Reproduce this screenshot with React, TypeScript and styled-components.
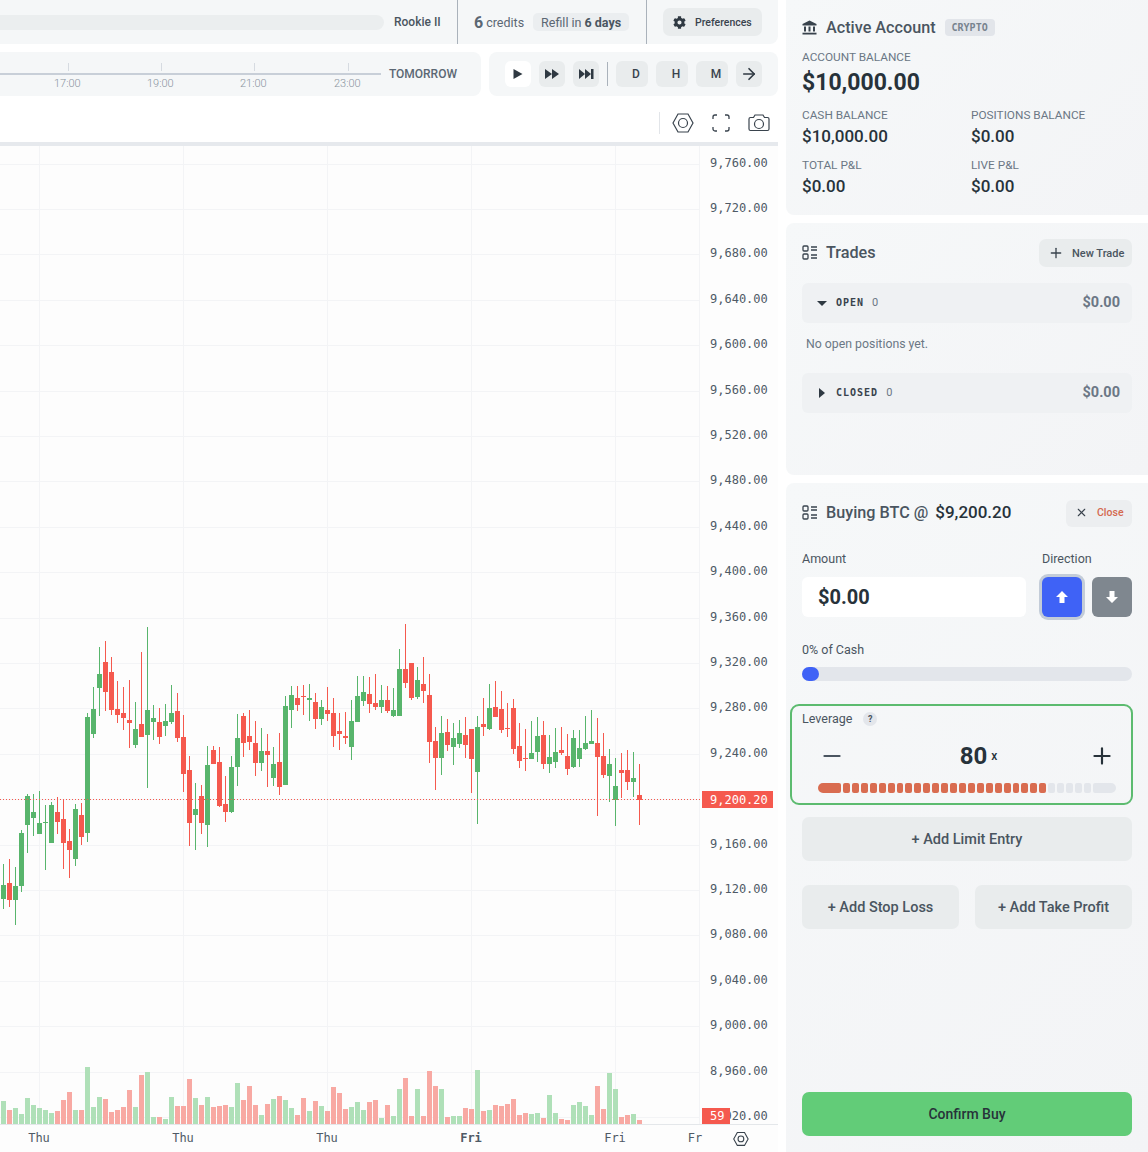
import styled, { createGlobalStyle } from 'styled-components';
import { ArrowRight, Minus, Plus, X } from 'lucide-react';
import { FaCog } from 'react-icons/fa';

type Candle = [number, number, number, number, number];

// direction (1 up, 0 down), then high, body top, body bottom, low, measured in 3x crop rows from y=620
const CANDLES: Candle[] = [
  [1, 732, 795, 837, 867], [0, 717, 789, 840, 861], [1, 741, 798, 840, 915], [1, 630, 639, 798, 816],
  [1, 522, 528, 615, 699], [1, 522, 576, 594, 648], [1, 513, 609, 642, 642], [1, 555, 606, 609, 750],
  [1, 546, 555, 669, 669], [0, 531, 576, 606, 642], [0, 537, 597, 669, 747], [0, 627, 663, 690, 774],
  [1, 552, 567, 717, 738], [0, 549, 585, 651, 675], [1, 279, 291, 639, 666], [1, 201, 267, 342, 354],
  [1, 81, 162, 204, 288], [0, 63, 126, 216, 273], [0, 111, 156, 270, 285], [0, 183, 267, 285, 309],
  [0, 201, 279, 294, 330], [0, 180, 300, 309, 384], [1, 246, 327, 375, 384], [0, 96, 312, 351, 351],
  [1, 21, 270, 345, 504], [1, 255, 294, 306, 360], [0, 264, 306, 351, 372], [1, 252, 303, 318, 348],
  [1, 195, 279, 306, 312], [0, 219, 273, 354, 366], [0, 285, 351, 462, 516], [0, 408, 450, 609, 678],
  [1, 489, 567, 585, 690], [0, 495, 528, 609, 642], [1, 378, 435, 615, 681], [0, 378, 390, 432, 432],
  [0, 381, 426, 558, 561], [0, 468, 552, 576, 606], [1, 408, 441, 576, 579], [1, 282, 354, 441, 498],
  [0, 279, 288, 369, 411], [0, 270, 348, 366, 390], [0, 303, 369, 429, 468], [1, 324, 393, 429, 453],
  [0, 342, 393, 405, 501], [1, 381, 432, 474, 498], [0, 339, 426, 501, 525], [1, 228, 258, 495, 495],
  [1, 198, 225, 270, 324], [0, 198, 234, 255, 273], [0, 195, 228, 231, 285], [1, 192, 234, 240, 303],
  [0, 219, 246, 297, 327], [1, 240, 261, 297, 315], [0, 201, 270, 282, 303], [0, 234, 279, 348, 381],
  [0, 279, 333, 342, 390], [0, 276, 348, 354, 372], [1, 240, 303, 381, 420], [1, 168, 228, 306, 306],
  [1, 168, 216, 243, 258], [0, 171, 222, 252, 279], [0, 162, 249, 261, 270], [1, 195, 240, 261, 279],
  [0, 198, 240, 273, 279], [1, 204, 270, 288, 291], [1, 87, 147, 288, 288], [0, 12, 147, 189, 204],
  [0, 129, 129, 234, 240], [1, 141, 180, 231, 237], [0, 111, 192, 213, 249], [0, 162, 225, 366, 429],
  [0, 321, 363, 414, 510], [1, 288, 339, 414, 465], [0, 297, 336, 375, 393], [1, 309, 354, 381, 435],
  [1, 300, 339, 372, 384], [0, 291, 345, 375, 414], [0, 327, 327, 417, 519], [1, 288, 321, 456, 612],
  [0, 234, 312, 321, 348], [1, 192, 264, 327, 330], [0, 183, 261, 291, 291], [0, 213, 267, 330, 339],
  [0, 249, 324, 327, 351], [0, 237, 264, 387, 402], [0, 309, 378, 423, 444], [0, 327, 414, 417, 453],
  [1, 303, 399, 417, 417], [1, 291, 348, 396, 426], [0, 303, 345, 432, 447], [1, 345, 411, 432, 459],
  [1, 324, 396, 426, 444], [0, 321, 390, 399, 405], [0, 342, 408, 447, 465], [1, 330, 354, 441, 444],
  [1, 330, 384, 417, 441], [1, 288, 369, 387, 390], [1, 270, 363, 372, 372], [0, 294, 369, 411, 588],
  [0, 339, 408, 465, 474], [1, 387, 432, 468, 546], [1, 414, 498, 540, 618], [0, 399, 450, 459, 534],
  [0, 390, 450, 486, 510], [1, 396, 474, 486, 531], [0, 432, 525, 540, 615],
];

// bar tops, in 3x crop rows from y=1050
const VOLUMES = [
  153, 180, 174, 192, 144, 165, 174, 180, 189, 183, 150, 126, 180, 180, 51, 171, 141, 147, 186, 180, 171, 120, 171,
  75, 66, 201, 201, 207, 141, 168, 168, 87, 144, 165, 141, 171, 168, 165, 171, 99, 150, 108, 165, 195, 162, 147, 138,
  150, 174, 195, 144, 183, 153, 168, 183, 111, 129, 177, 171, 156, 180, 156, 150, 204, 165, 198, 117, 84, 198, 117,
  198, 63, 108, 117, 201, 198, 198, 174, 177, 60, 183, 180, 165, 168, 162, 147, 195, 189, 192, 189, 204, 135, 189,
  207, 210, 165, 156, 168, 195, 108, 177, 69, 117, 201, 195, 192, 210,
];

const PRICES = [
  '9,760.00', '9,720.00', '9,680.00', '9,640.00', '9,600.00', '9,560.00', '9,520.00', '9,480.00', '9,440.00',
  '9,400.00', '9,360.00', '9,320.00', '9,280.00', '9,240.00', '9,200.00', '9,160.00', '9,120.00', '9,080.00',
  '9,040.00', '9,000.00', '8,960.00', '8,920.00',
];

const DAY_LABELS = [
  { x: 39, text: 'Thu' },
  { x: 183, text: 'Thu' },
  { x: 327, text: 'Thu' },
  { x: 471, text: 'Fri', bold: true },
  { x: 615, text: 'Fri' },
  { x: 695, text: 'Fr' },
];

const HOURS = ['17:00', '19:00', '21:00', '23:00'];
const SEGMENTS = Array.from({ length: 28 }, (_, i) => i);

const UP = '#58b56c';
const DOWN = '#f5594e';

const priceY = (i: number) => Math.round(163.6 + i * 45.4);

const GlobalStyle = createGlobalStyle`
  html, body {
    margin: 0;
    background: #fff;
  }
  * {
    box-sizing: border-box;
  }
  body {
    font-family: Roboto, "Noto Sans", sans-serif;
    color: #27323a;
  }
`;

const HexIcon = ({ size = 22 }: { size?: number }) => (
  <svg width={size} height={size} viewBox="0 0 22 22" fill="none" stroke="#39434d" strokeWidth="1.2">
    <polygon points="1,11 6,2 16,2 21,11 16,20 6,20" />
    <circle cx="11" cy="11" r="4.5" />
  </svg>
);

const FullscreenIcon = () => (
  <svg width="18" height="18" viewBox="0 0 18 18" fill="none" stroke="#39434d" strokeWidth="1.3">
    <path d="M1 5V3a2 2 0 0 1 2-2h2M13 1h2a2 2 0 0 1 2 2v2M17 13v2a2 2 0 0 1-2 2h-2M5 17H3a2 2 0 0 1-2-2v-2" />
  </svg>
);

const CameraIcon = () => (
  <svg width="22" height="18" viewBox="0 0 22 18" fill="none" stroke="#39434d" strokeWidth="1.2">
    <path d="M2.5 3.5h3l1.5-2.5h8l1.5 2.5h3a1.5 1.5 0 0 1 1.5 1.5v10a1.5 1.5 0 0 1-1.5 1.5h-17A1.5 1.5 0 0 1 1 15V5a1.5 1.5 0 0 1 1.5-1.5z" />
    <circle cx="11" cy="10" r="4.5" />
  </svg>
);

const BankIcon = () => (
  <svg width="15" height="15" viewBox="0 0 15 15" fill="#39434d">
    <path d="M7.5 0.5 14.5 4v1.5H.5V4z" />
    <rect x="2" y="6.5" width="2" height="5" />
    <rect x="6.5" y="6.5" width="2" height="5" />
    <rect x="11" y="6.5" width="2" height="5" />
    <rect x=".5" y="12.7" width="14" height="1.8" />
  </svg>
);

const ListIcon = () => (
  <svg width="15" height="15" viewBox="0 0 15 15" fill="none" stroke="#39434d" strokeWidth="1.3">
    <rect x="1" y="1" width="5" height="5" rx="1" />
    <rect x="1" y="9" width="5" height="5" rx="1" />
    <path d="M9 2h6M9 5h6M9 10h6M9 13h6" />
  </svg>
);

const PlayIcon = () => (
  <svg width="10" height="12" viewBox="0 0 10 12" fill="#2f3942">
    <polygon points="0.5,1 9.5,6 0.5,11" />
  </svg>
);

const ForwardIcon = () => (
  <svg width="14" height="12" viewBox="0 0 14 12" fill="#2f3942">
    <polygon points="0,1 7,6 0,11" />
    <polygon points="7,1 14,6 7,11" />
  </svg>
);

const SkipIcon = () => (
  <svg width="15" height="12" viewBox="0 0 15 12" fill="#2f3942">
    <polygon points="0,1 6,6 0,11" />
    <polygon points="6,1 12,6 6,11" />
    <rect x="12" y="1" width="2.5" height="10" />
  </svg>
);

const Caret = ({ open }: { open?: boolean }) => (
  <svg width="10" height="10" viewBox="0 0 10 10" fill="#2f3942">
    {open ? <polygon points="0,3 10,3 5,8" /> : <polygon points="2,0 8,5 2,10" />}
  </svg>
);

const ArrowIcon = ({ down }: { down?: boolean }) => (
  <svg width="14" height="14" viewBox="0 0 14 14" fill="#fff">
    <g transform={down ? 'rotate(180 7 7)' : undefined}>
      <polygon points="7,1 13,7 9.5,7 9.5,13 4.5,13 4.5,7 1,7" />
    </g>
  </svg>
);

const Chart = () => (
  <ChartSvg viewBox="0 146 778 1006" width="778" height="1006">
    {PRICES.map((_, i) => (
      <rect key={i} x="0" y={priceY(i)} width="699" height="1" fill="#f3f4f6" />
    ))}
    {[39, 183, 327, 471, 615, 699].map((x) => (
      <rect key={x} x={x} y="146" width="1" height="978" fill="#f3f4f6" />
    ))}
    {VOLUMES.map((top, i) => (
      <rect
        key={i}
        x={1 + i * 6}
        y={1050 + top / 3}
        width="5"
        height={1124 - (1050 + top / 3)}
        fill={CANDLES[i][0] ? '#afe0b8' : '#f8a9a3'}
      />
    ))}
    <rect x="0" y="1124" width="778" height="1" fill="#e4e7ea" />
    {CANDLES.map(([dir, high, top, bottom, low], i) => {
      const color = dir ? UP : DOWN;
      return (
        <g key={i} fill={color}>
          <rect x={3 + i * 6} y={620 + high / 3} width="1" height={(low - high) / 3} />
          <rect x={1 + i * 6} y={620 + top / 3} width="5" height={Math.max((bottom - top) / 3, 1)} />
        </g>
      );
    })}
    <line x1="0" y1="799.5" x2="702" y2="799.5" stroke={DOWN} strokeWidth="1" strokeDasharray="1 2" />
    {PRICES.map((price, i) =>
      price === '9,200.00' ? null : (
        <AxisText key={price} x="710" y={priceY(i) + 3}>
          {price}
        </AxisText>
      ),
    )}
    <rect x="702" y="791" width="71" height="17" fill={DOWN} />
    <AxisText x="710" y="804" $light>
      9,200.20
    </AxisText>
    <rect x="702" y="1108" width="28" height="16" fill={DOWN} />
    <AxisText x="710" y="1120" $light>
      59
    </AxisText>
    {DAY_LABELS.map((label) => (
      <AxisText
        key={label.x}
        x={label.x}
        y="1142"
        textAnchor="middle"
        fontWeight={label.bold ? 700 : 400}
      >
        {label.text}
      </AxisText>
    ))}
    <g transform="translate(733 1131) scale(0.72)">
      <polygon points="1,11 6,2 16,2 21,11 16,20 6,20" fill="none" stroke="#39434d" strokeWidth="1.5" />
      <circle cx="11" cy="11" r="4" fill="none" stroke="#39434d" strokeWidth="1.5" />
    </g>
  </ChartSvg>
);

const App = () => {
  return (
    <Page>
      <GlobalStyle />
      <LeftColumn>
        <TopBar>
          <XpTrack />
          <RankName>Rookie II</RankName>
          <CreditsCell>
            <CreditCount>6</CreditCount>
            <CreditLabel>credits</CreditLabel>
            <RefillPill>
              Refill in <b>6 days</b>
            </RefillPill>
          </CreditsCell>
          <PreferencesCell>
            <PreferencesButton>
              <FaCog size={13} color="#2f3942" />
              Preferences
            </PreferencesButton>
          </PreferencesCell>
        </TopBar>
        <ReplayRow>
          <Timeline>
            <TimelineTrack>
              {HOURS.map((hour) => (
                <HourMark key={hour}>
                  <HourLabel>{hour}</HourLabel>
                </HourMark>
              ))}
            </TimelineTrack>
            <TomorrowLabel>TOMORROW</TomorrowLabel>
          </Timeline>
          <Controls>
            <IconButton $active>
              <PlayIcon />
            </IconButton>
            <IconButton>
              <ForwardIcon />
            </IconButton>
            <IconButton>
              <SkipIcon />
            </IconButton>
            <ControlDivider />
            <IntervalButton>D</IntervalButton>
            <IntervalButton>H</IntervalButton>
            <IntervalButton>M</IntervalButton>
            <IconButton>
              <ArrowRight size={18} color="#2f3942" strokeWidth={2.2} />
            </IconButton>
          </Controls>
        </ReplayRow>
        <ChartToolbar>
          <ToolDivider />
          <ToolIcon>
            <HexIcon />
          </ToolIcon>
          <ToolIcon>
            <FullscreenIcon />
          </ToolIcon>
          <ToolIcon>
            <CameraIcon />
          </ToolIcon>
        </ChartToolbar>
        <Chart />
      </LeftColumn>

      <RightColumn>
        <AccountPanel>
          <PanelTitleRow>
            <BankIcon />
            <PanelTitle>Active Account</PanelTitle>
            <Badge>CRYPTO</Badge>
          </PanelTitleRow>
          <StatLabel>ACCOUNT BALANCE</StatLabel>
          <MainBalance>$10,000.00</MainBalance>
          <StatGrid>
            <div>
              <StatLabel>CASH BALANCE</StatLabel>
              <StatValue>$10,000.00</StatValue>
            </div>
            <div>
              <StatLabel>POSITIONS BALANCE</StatLabel>
              <StatValue>$0.00</StatValue>
            </div>
            <div>
              <StatLabel>TOTAL P&amp;L</StatLabel>
              <StatValue>$0.00</StatValue>
            </div>
            <div>
              <StatLabel>LIVE P&amp;L</StatLabel>
              <StatValue>$0.00</StatValue>
            </div>
          </StatGrid>
        </AccountPanel>

        <TradesPanel>
          <TradesHeader>
            <PanelTitleRow>
              <ListIcon />
              <PanelTitle>Trades</PanelTitle>
            </PanelTitleRow>
            <NewTradeButton>
              <Plus size={16} color="#39434d" />
              New Trade
            </NewTradeButton>
          </TradesHeader>
          <GroupRow>
            <Caret open />
            <GroupName>OPEN</GroupName>
            <GroupCount>0</GroupCount>
            <GroupTotal>$0.00</GroupTotal>
          </GroupRow>
          <EmptyNote>No open positions yet.</EmptyNote>
          <GroupRow>
            <Caret />
            <GroupName>CLOSED</GroupName>
            <GroupCount>0</GroupCount>
            <GroupTotal>$0.00</GroupTotal>
          </GroupRow>
        </TradesPanel>

        <OrderPanel>
          <OrderHeader>
            <PanelTitleRow>
              <ListIcon />
              <PanelTitle>Buying BTC @</PanelTitle>
              <OrderPrice>$9,200.20</OrderPrice>
            </PanelTitleRow>
            <CloseButton>
              <X size={13} color="#39434d" />
              <CloseLabel>Close</CloseLabel>
            </CloseButton>
          </OrderHeader>
          <AmountRow>
            <AmountField>
              <FieldLabel>Amount</FieldLabel>
              <AmountInput>$0.00</AmountInput>
            </AmountField>
            <div>
              <FieldLabel>Direction</FieldLabel>
              <DirectionButtons>
                <DirectionButton $selected>
                  <ArrowIcon />
                </DirectionButton>
                <DirectionButton>
                  <ArrowIcon down />
                </DirectionButton>
              </DirectionButtons>
            </div>
          </AmountRow>
          <CashLabel>0% of Cash</CashLabel>
          <SliderTrack>
            <SliderThumb />
          </SliderTrack>
          <LeverageBox>
            <LeverageHead>
              <FieldLabel as="span">Leverage</FieldLabel>
              <HelpDot>?</HelpDot>
            </LeverageHead>
            <Stepper>
              <Minus size={26} color="#4a5560" strokeWidth={2} />
              <LeverageValue>
                80<LeverageUnit>x</LeverageUnit>
              </LeverageValue>
              <Plus size={26} color="#27323a" strokeWidth={2} />
            </Stepper>
            <SegmentBar>
              <Segment $on $wide />
              {SEGMENTS.map((i) => (
                <Segment key={i} $on={i < 23} />
              ))}
              <Segment $wide />
            </SegmentBar>
          </LeverageBox>
          <AddButton>+ Add Limit Entry</AddButton>
          <AddRow>
            <AddButton>+ Add Stop Loss</AddButton>
            <AddButton>+ Add Take Profit</AddButton>
          </AddRow>
          <ConfirmButton>Confirm Buy</ConfirmButton>
        </OrderPanel>
      </RightColumn>
    </Page>
  );
};

const Page = styled.div`
  display: flex;
  gap: 8px;
  width: 1148px;
  height: 1152px;
  overflow: hidden;
  background: #fff;
`;

const LeftColumn = styled.div`
  display: flex;
  flex-direction: column;
  width: 778px;
  flex: none;
`;

const TopBar = styled.div`
  display: flex;
  flex: none;
  align-items: center;
  height: 44px;
  background: #f5f7f8;
  border-bottom-right-radius: 8px;
`;

const XpTrack = styled.div`
  flex: 1;
  height: 15px;
  background: #ebeeef;
  border-radius: 0 8px 8px 0;
`;

const RankName = styled.div`
  width: 73px;
  padding-left: 10px;
  font-size: 12px;
  font-weight: 500;
  color: #4a5560;
`;

const CreditsCell = styled.div`
  display: flex;
  align-items: center;
  width: 190px;
  height: 44px;
  padding-left: 16px;
  border-left: 1px solid #aab2bb;
  border-right: 1px solid #aab2bb;
`;

const CreditCount = styled.span`
  font-size: 16px;
  font-weight: 700;
  color: #5b6773;
`;

const CreditLabel = styled.span`
  margin-left: 3px;
  font-size: 12.5px;
  color: #5b6773;
`;

const RefillPill = styled.span`
  display: flex;
  align-items: center;
  gap: 3px;
  height: 18px;
  margin-left: 9px;
  padding: 0 8px;
  background: #ebeef0;
  border-radius: 5px;
  font-size: 12.5px;
  color: #5b6773;
  white-space: nowrap;

  b {
    font-weight: 700;
    color: #4a5560;
  }
`;

const PreferencesCell = styled.div`
  display: flex;
  width: 131px;
  padding-left: 16px;
`;

const PreferencesButton = styled.button`
  display: flex;
  align-items: center;
  gap: 9px;
  width: 99px;
  height: 28px;
  padding: 0 9px 0 10px;
  border: 0;
  border-radius: 7px;
  background: #e9eced;
  font: 500 10.5px Roboto, sans-serif;
  color: #39434d;
  white-space: nowrap;
`;

const ReplayRow = styled.div`
  display: flex;
  flex: none;
  gap: 8px;
  height: 44px;
  margin-top: 8px;
`;

const Timeline = styled.div`
  display: flex;
  align-items: center;
  width: 481px;
  padding-right: 24px;
  background: #f5f7f8;
  border-radius: 0 8px 8px 0;
`;

const TimelineTrack = styled.div`
  position: relative;
  flex: 1;
  height: 2px;
  background: #c8cfd8;
`;

const HourMark = styled.div`
  position: absolute;
  top: -10px;
  width: 1px;
  height: 8px;
  background: #d6dbe1;

  &:nth-child(1) {
    left: 68px;
  }
  &:nth-child(2) {
    left: 161px;
  }
  &:nth-child(3) {
    left: 254px;
  }
  &:nth-child(4) {
    left: 348px;
  }
`;

const HourLabel = styled.span`
  position: absolute;
  top: 14px;
  left: -14px;
  font-size: 11px;
  font-weight: 300;
  color: #8a94a0;
`;

const TomorrowLabel = styled.span`
  margin-left: 8px;
  font-size: 12px;
  font-weight: 500;
  color: #5b6773;
`;

const Controls = styled.div`
  display: flex;
  flex: 1;
  align-items: center;
  gap: 8px;
  padding: 0 16px;
  background: #f5f7f8;
  border-radius: 8px;
`;

const IconButton = styled.button<{ $active?: boolean }>`
  display: flex;
  align-items: center;
  justify-content: center;
  width: 26px;
  height: 26px;
  padding: 0;
  border: 0;
  border-radius: 6px;
  background: ${(p) => (p.$active ? '#fff' : '#e9eced')};
`;

const ControlDivider = styled.div`
  width: 1px;
  height: 24px;
  background: #aab2bb;
`;

const IntervalButton = styled.button`
  width: 32px;
  height: 26px;
  padding: 0 0 0 8px;
  border: 0;
  border-radius: 6px;
  background: #e9eced;
  font: 500 12px Roboto, sans-serif;
  color: #39434d;
`;

const ChartToolbar = styled.div`
  display: flex;
  flex: none;
  align-items: center;
  justify-content: flex-end;
  height: 50px;
  padding: 8px 8px 0 0;
  border-bottom: 4px solid #e6e9ed;
`;

const ToolDivider = styled.div`
  width: 1px;
  height: 22px;
  margin-right: 12px;
  background: #e2e5e9;
`;

const ToolIcon = styled.div`
  display: flex;
  align-items: center;
  justify-content: center;
  width: 22px;
  margin-left: 16px;

  &:nth-child(2) {
    margin-left: 0;
  }
`;

const ChartSvg = styled.svg`
  display: block;
  flex: none;
  background: #fdfdfd;
`;

const AxisText = styled.text<{ $light?: boolean }>`
  font-family: "DejaVu Sans Mono", monospace;
  font-size: 12px;
  fill: ${(p) => (p.$light ? '#fff' : '#4f5a66')};
`;

const RightColumn = styled.div`
  display: flex;
  flex: 1;
  flex-direction: column;
  gap: 8px;
  min-width: 0;
`;

const PanelBase = styled.section`
  padding: 16px;
  background: linear-gradient(135deg, #f6f8f9, #f3f4f6);
  border-radius: 8px 0 0 8px;
`;

const AccountPanel = styled(PanelBase)`
  flex: none;
  height: 215px;
  border-top-left-radius: 0;
  padding-top: 17px;
`;

const PanelTitleRow = styled.div`
  display: flex;
  align-items: center;
  gap: 9px;
  height: 20px;
`;

const PanelTitle = styled.h2`
  margin: 0;
  font-size: 16.2px;
  font-weight: 500;
  color: #4a5560;
`;

const Badge = styled.span`
  padding: 3px 7px;
  background: #e2e5ea;
  border-radius: 4px;
  font-family: "DejaVu Sans Mono", monospace;
  font-size: 10px;
  font-weight: 700;
  color: #78838f;
`;

const StatLabel = styled.div`
  margin-top: 13px;
  font-size: 11.8px;
  line-height: 15px;
  color: #6b7785;
`;

const MainBalance = styled.div`
  margin-top: 3px;
  font-size: 23px;
  font-weight: 700;
  line-height: 30px;
  color: #27323a;
`;

const StatGrid = styled.div`
  display: grid;
  grid-template-columns: 169px 1fr;
  margin-top: -1px;

  ${StatLabel} {
    margin-top: 11px;
  }
`;

const StatValue = styled.div`
  margin-top: 2px;
  font-size: 17px;
  font-weight: 500;
  line-height: 22px;
  color: #27323a;
`;

const TradesPanel = styled(PanelBase)`
  flex: none;
  height: 252px;
`;

const TradesHeader = styled.div`
  display: flex;
  align-items: center;
  justify-content: space-between;
  height: 28px;
  margin-bottom: 16px;

  ${PanelTitleRow} {
    margin-bottom: 2px;
  }
`;

const NewTradeButton = styled.button`
  display: flex;
  align-items: center;
  gap: 8px;
  width: 93px;
  height: 28px;
  padding: 0 0 0 9px;
  border: 0;
  border-radius: 7px;
  background: #e9eced;
  font: 500 11px Roboto, sans-serif;
  color: #4a5560;
  white-space: nowrap;
`;

const GroupRow = styled.div`
  display: flex;
  align-items: center;
  height: 40px;
  padding: 0 12px 1px 15px;
  background: #eff1f3;
  border-radius: 6px;
`;

const GroupName = styled.span`
  margin-left: 9px;
  font-family: "DejaVu Sans Mono", monospace;
  font-size: 10px;
  font-weight: 700;
  letter-spacing: 1px;
  color: #39434d;
`;

const GroupCount = styled.span`
  margin-left: 8px;
  font-size: 11px;
  color: #6b7785;
`;

const GroupTotal = styled.span`
  margin-left: auto;
  font-size: 14.5px;
  font-weight: 700;
  color: #6b7785;
`;

const EmptyNote = styled.p`
  height: 50px;
  margin: 0;
  padding: 13px 4px 0;
  font-size: 12.3px;
  line-height: 16px;
  color: #6b7785;
`;

const OrderPanel = styled(PanelBase)`
  display: flex;
  flex: 1;
  flex-direction: column;
  border-bottom-left-radius: 0;
`;

const OrderHeader = styled.div`
  display: flex;
  flex: none;
  align-items: flex-start;
  justify-content: space-between;
  height: 27px;
  margin-top: 1px;
  padding-top: 2px;
`;

const OrderPrice = styled.span`
  margin-left: -2px;
  font-size: 17px;
  font-weight: 500;
  color: #27323a;
`;

const CloseButton = styled.button`
  display: flex;
  align-items: center;
  gap: 9px;
  width: 66px;
  height: 27px;
  margin-top: -2px;
  padding: 0 0 2px 9px;
  border: 0;
  border-radius: 6px;
  background: #eceef0;
`;

const CloseLabel = styled.span`
  font: 500 10.5px Roboto, sans-serif;
  color: #d4694f;
`;

const AmountRow = styled.div`
  display: flex;
  flex: none;
  gap: 16px;
  margin-top: 23px;
`;

const AmountField = styled.div`
  flex: 1;
`;

const FieldLabel = styled.div`
  font-size: 12.5px;
  line-height: 17px;
  color: #4a5560;
`;

const AmountInput = styled.div`
  display: flex;
  align-items: center;
  height: 40px;
  margin-top: 10px;
  padding-left: 16px;
  background: #fff;
  border-radius: 6px;
  font-size: 20px;
  font-weight: 700;
  color: #27323a;
`;

const DirectionButtons = styled.div`
  display: flex;
  gap: 10px;
  margin-top: 10px;
`;

const DirectionButton = styled.button<{ $selected?: boolean }>`
  display: flex;
  align-items: center;
  justify-content: center;
  width: 40px;
  height: 40px;
  padding: 0;
  border: 0;
  border-radius: 6px;
  background: ${(p) => (p.$selected ? '#3f62f6' : '#7f878f')};
  box-shadow: ${(p) => (p.$selected ? '0 0 0 3px #c3ccd8' : 'none')};
`;

const CashLabel = styled.div`
  margin-top: 24px;
  font-size: 12.5px;
  line-height: 17px;
  color: #4a5560;
`;

const SliderTrack = styled.div`
  flex: none;
  height: 14px;
  margin-top: 9px;
  background: #e3e6eb;
  border-radius: 7px;
`;

const SliderThumb = styled.div`
  width: 17px;
  height: 14px;
  background: #3f62f6;
  border-radius: 7px;
`;

const LeverageBox = styled.div`
  flex: none;
  height: 101px;
  margin: 23px -1px 0 -12px;
  padding: 4px 15px 0 10px;
  border: 2px solid #5cbb6f;
  border-radius: 9px;
`;

const LeverageHead = styled.div`
  display: flex;
  align-items: center;
  gap: 11px;
  height: 17px;
`;

const HelpDot = styled.span`
  display: flex;
  align-items: center;
  justify-content: center;
  width: 14px;
  height: 14px;
  background: #e3e6eb;
  border-radius: 50%;
  font-size: 9px;
  font-weight: 700;
  color: #4a5560;
`;

const Stepper = styled.div`
  display: flex;
  align-items: center;
  justify-content: space-between;
  height: 30px;
  margin-top: 14px;
  padding: 0 1px 0 17px;
`;

const LeverageValue = styled.div`
  margin-left: 23px;
  font-size: 24px;
  font-weight: 700;
  color: #27323a;
`;

const LeverageUnit = styled.span`
  margin-left: 4px;
  font-size: 12px;
  font-weight: 500;
  vertical-align: 4px;
`;

const SegmentBar = styled.div`
  display: flex;
  gap: 2px;
  height: 10px;
  margin-top: 12px;
  padding-left: 16px;
`;

const Segment = styled.div<{ $on?: boolean; $wide?: boolean }>`
  flex: ${(p) => (p.$wide ? '0 0 23px' : '1')};
  background: ${(p) => (p.$on ? '#d96c50' : '#e3e6eb')};
  border-radius: 2px;

  &:first-child {
    border-radius: 5px 2px 2px 5px;
  }
  &:last-child {
    border-radius: 2px 5px 5px 2px;
  }
`;

const AddButton = styled.button`
  flex: none;
  height: 44px;
  margin-top: 12px;
  border: 0;
  border-radius: 7px;
  background: #e9eced;
  font: 500 14.5px Roboto, sans-serif;
  color: #4a5560;
`;

const AddRow = styled.div`
  display: grid;
  flex: none;
  grid-template-columns: 1fr 1fr;
  gap: 16px;
  margin-top: 12px;
`;

const ConfirmButton = styled.button`
  flex: none;
  height: 44px;
  margin-top: auto;
  border: 0;
  border-radius: 7px;
  background: #62cc78;
  font: 500 14px Roboto, sans-serif;
  color: #27323a;
`;

export default App;
